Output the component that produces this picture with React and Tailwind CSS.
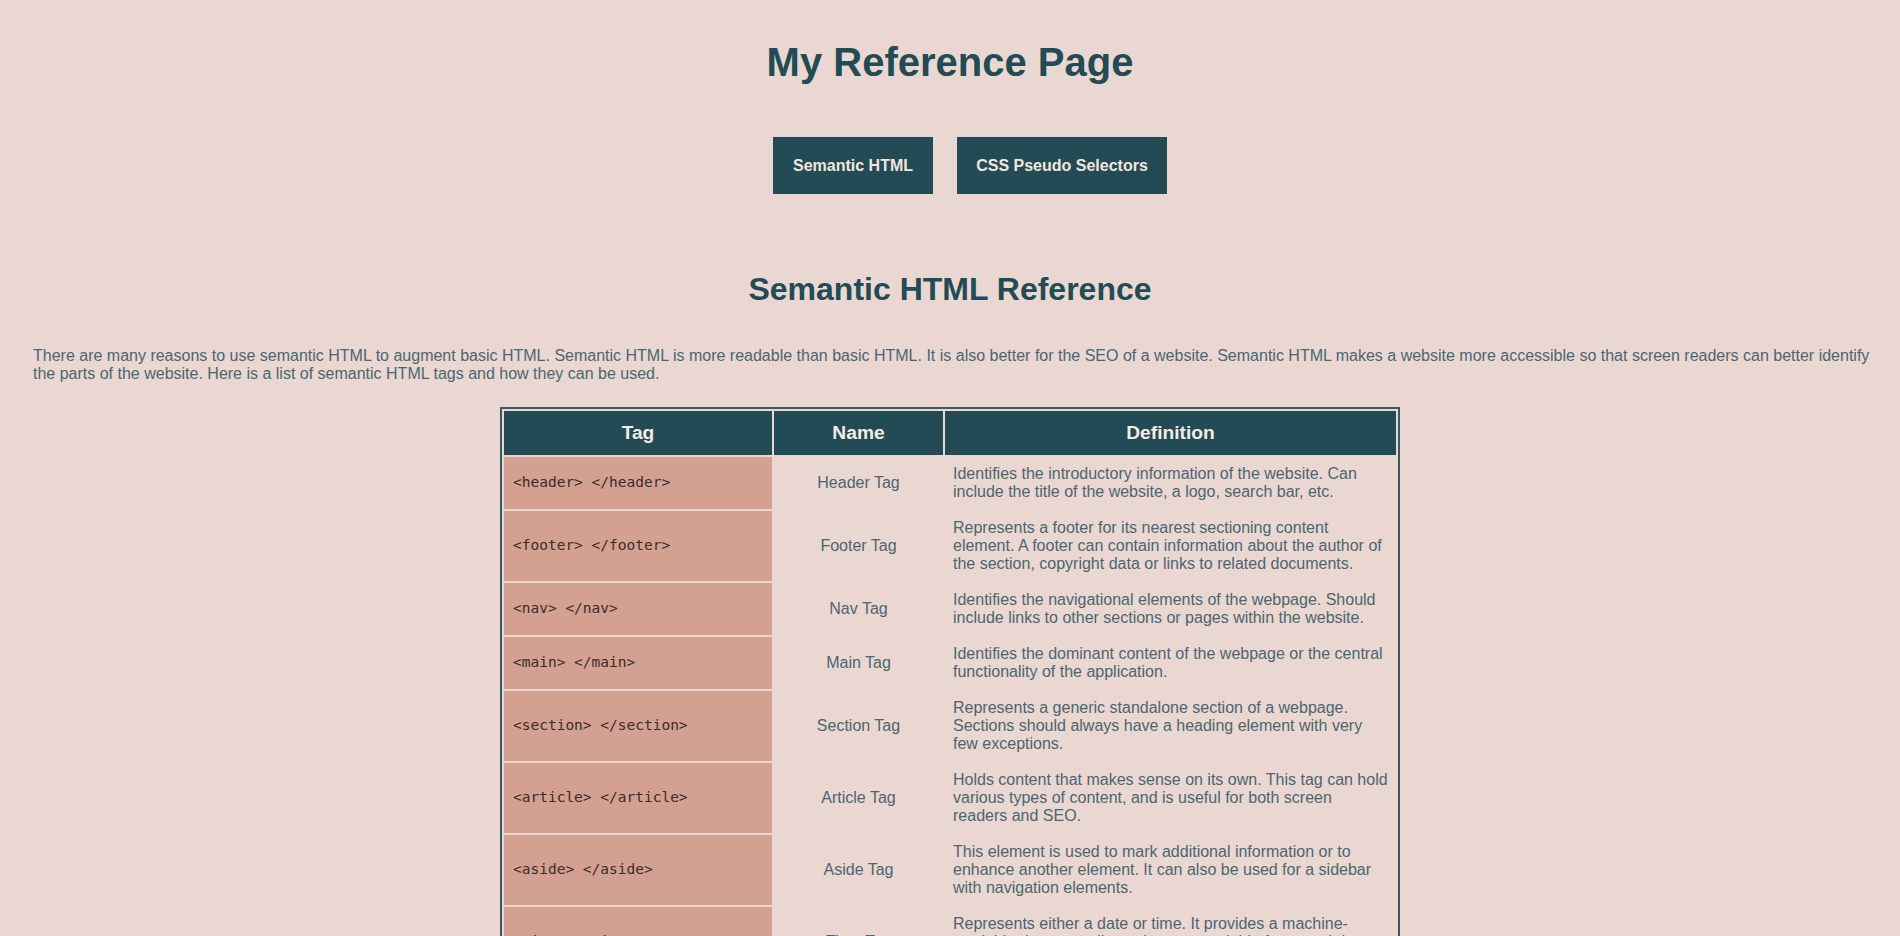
import React from "react";

const rows = [
  {
    tag: "<header> </header>",
    name: "Header Tag",
    def: "Identifies the introductory information of the website. Can include the title of the website, a logo, search bar, etc.",
  },
  {
    tag: "<footer> </footer>",
    name: "Footer Tag",
    def: "Represents a footer for its nearest sectioning content element. A footer can contain information about the author of the section, copyright data or links to related documents.",
  },
  {
    tag: "<nav> </nav>",
    name: "Nav Tag",
    def: "Identifies the navigational elements of the webpage. Should include links to other sections or pages within the website.",
  },
  {
    tag: "<main> </main>",
    name: "Main Tag",
    def: "Identifies the dominant content of the webpage or the central functionality of the application.",
  },
  {
    tag: "<section> </section>",
    name: "Section Tag",
    def: "Represents a generic standalone section of a webpage. Sections should always have a heading element with very few exceptions.",
  },
  {
    tag: "<article> </article>",
    name: "Article Tag",
    def: "Holds content that makes sense on its own. This tag can hold various types of content, and is useful for both screen readers and SEO.",
  },
  {
    tag: "<aside> </aside>",
    name: "Aside Tag",
    def: "This element is used to mark additional information or to enhance another element. It can also be used for a sidebar with navigation elements.",
  },
  {
    tag: "<time> </time>",
    name: "Time Tag",
    def: "Represents either a date or time. It provides a machine-readable date as well as a human-readable formatted date using the datetime attribute.",
  },
  {
    tag: "<figure> </figure>",
    name: "Figure Tag",
    def: "Holds self-contained content such as images, diagrams or code listings, usually with a caption.",
  },
];

export default function App() {
  return (
    <div className="min-h-screen bg-[#ead7d1] pb-16 font-['Liberation_Sans',Arial,sans-serif] text-[#4b6670]">
      <h1 className="pt-[39px] text-center text-[40px] font-bold leading-[46px] text-[#234b55]">
        My Reference Page
      </h1>

      <nav className="mt-[52px] flex justify-center gap-6 pl-[40px]">
        <button className="h-[57px] w-[160px] bg-[#234b55] text-[16px] font-bold text-[#f2e6dc]">
          Semantic HTML
        </button>
        <button className="h-[57px] w-[210px] bg-[#234b55] text-[16px] font-bold text-[#f2e6dc]">
          CSS Pseudo Selectors
        </button>
      </nav>

      <h2 className="mt-[77px] text-center text-[32px] font-bold leading-[37px] text-[#234b55]">
        Semantic HTML Reference
      </h2>

      <p className="mt-[39px] pl-[33px] pr-[24px] text-[16px] leading-[18px]">
        There are many reasons to use semantic HTML to augment basic HTML. Semantic HTML is more
        readable than basic HTML. It is also better for the SEO of a website. Semantic HTML makes a
        website more accessible so that screen readers can better identify the parts of the website.
        Here is a list of semantic HTML tags and how they can be used.
      </p>

      <table className="mx-auto mt-[24px] w-[900px] table-fixed border-separate border-spacing-[2px] border-2 border-[#38595f]">
        <colgroup>
          <col className="w-[268px]" />
          <col className="w-[169px]" />
          <col />
        </colgroup>
        <thead>
          <tr>
            {["Tag", "Name", "Definition"].map((h) => (
              <th
                key={h}
                className="bg-[#234b55] py-[11px] text-center text-[19.2px] font-bold leading-[22px] text-[#f5ece4]"
              >
                {h}
              </th>
            ))}
          </tr>
        </thead>
        <tbody>
          {rows.map((r) => (
            <tr key={r.name}>
              <td className="bg-[#d4a091] px-[9px] py-2 align-middle font-['DejaVu_Sans_Mono',monospace] text-[14.5px] text-[#3b2c2a]">
                {r.tag}
              </td>
              <td className="px-2 py-2 text-center align-middle text-[16px] leading-[18px]">{r.name}</td>
              <td className="px-2 py-2 align-middle text-[16px] leading-[18px]">{r.def}</td>
            </tr>
          ))}
        </tbody>
      </table>
    </div>
  );
}
